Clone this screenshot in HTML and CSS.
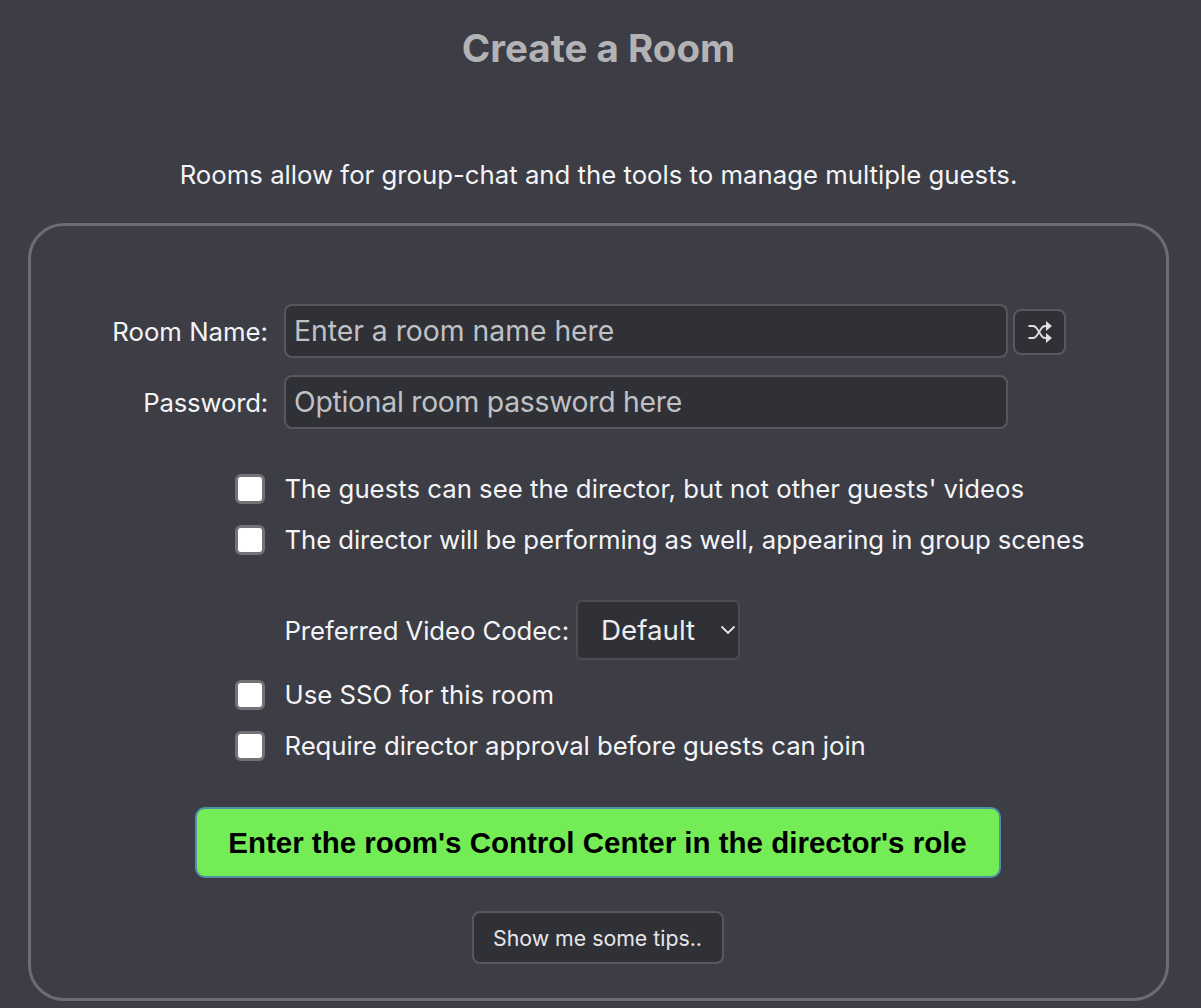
FILE: index.html
```html
<!DOCTYPE html>
<html>
<head>
    <meta charset="utf-8" />
    <title>Create a Room</title>
    <link rel="stylesheet" href="styles.css">
</head>
<body>
    <div class="page">
        <h1 class="title">Create a Room</h1>
        <p class="intro">Rooms allow for group-chat and the tools to manage multiple guests.</p>

        <div class="card">
            <div class="field-row">
                <label class="field-label" for="room-name">Room Name:</label>
                <input class="text-input" id="room-name" type="text" placeholder="Enter a room name here" />
                <button class="shuffle-btn" type="button" aria-label="Random room name">
                    <svg width="26" height="26" viewBox="0 0 26 26" fill="none" stroke="#e0e0e4" stroke-width="1.800">
                        <path d="M1.500 7h4.500c2 0 3 1 4.200 3l3.800 6c1.200 2 2.200 3 4.200 3h1.500" />
                        <path d="M1.500 19h4.500c2 0 3-1 4.200-3l3.800-6c1.200-2 2.200-3 4.200-3h1.500" />
                        <path d="M19 2l6 5-6 5z" fill="#e0e0e4" stroke="none" />
                        <path d="M19 14l6 5-6 5z" fill="#e0e0e4" stroke="none" />
                    </svg>
                </button>
            </div>
            <div class="field-row field-row-second">
                <label class="field-label tight-label" for="room-pass">Password:</label>
                <input class="text-input pass-input" id="room-pass" type="text" placeholder="Optional room password here" />
            </div>

            <div class="options">
                <label class="option option-a"><input class="check" type="checkbox" /><span>The guests can see the director, but not other guests' videos</span></label>
                <label class="option option-b"><input class="check" type="checkbox" /><span>The director will be performing as well, appearing in group scenes</span></label>
                <div class="codec-row">
                    <label for="codec">Preferred Video Codec:</label>
                    <div class="select-wrap">
                        <select class="codec-select" id="codec">
                            <option>Default</option>
                        </select>
                        <svg class="select-arrow" width="16" height="10" viewBox="0 0 16 10" fill="none" stroke="#e6e6ea" stroke-width="1.800">
                            <path d="M1.500 1.500L8 8l6.500-6.500" />
                        </svg>
                    </div>
                </div>
                <label class="option option-c"><input class="check" type="checkbox" /><span>Use SSO for this room</span></label>
                <label class="option option-d"><input class="check" type="checkbox" /><span>Require director approval before guests can join</span></label>
            </div>

            <div class="actions">
                <button class="enter-btn" type="button">Enter the room's Control Center in the director's role</button>
                <button class="tips-btn" type="button">Show me some tips..</button>
            </div>
        </div>
    </div>
</body>
</html>
```

FILE: styles.css
```css
html, body {
    margin: 0;
    height: 100%;
    overflow: hidden;
    background: #3c3d45;
}
body {
    font-family: Inter, "Noto Sans", sans-serif;
    color: #f4f4f6;
}
.page {
    padding: 0 32px 0 28px;
}
.title {
    margin: 0;
    padding-top: 26px;
    font-size: 38.5px;
    line-height: 44px;
    font-weight: 700;
    color: #b3b3b5;
    text-align: center;
}
.intro {
    margin: 0;
    padding-top: 90px;
    font-size: 25.75px;
    line-height: 30px;
    text-align: center;
}
.card {
    box-sizing: border-box;
    height: 778px;
    margin-top: 33px;
    padding: 78px 0 0;
    border: 3px solid #6c6d70;
    border-radius: 36px;
}
.field-row {
    display: flex;
    align-items: center;
}
.field-row-second {
    margin-top: 17px;
}
.field-label {
    width: 237px;
    margin-right: 16px;
    font-size: 25.75px;
    text-align: right;
}
.tight-label {
    letter-spacing: -0.2px;
}
.text-input {
    box-sizing: border-box;
    width: 724px;
    height: 54px;
    padding: 0 8px;
    border: 2px solid #57585d;
    border-radius: 8px;
    background: #303137;
    color: #f4f4f6;
    font-family: inherit;
    font-size: 28.3px;
}
.text-input::placeholder {
    color: #c0c1c5;
    opacity: 1;
}
.pass-input::placeholder {
    letter-spacing: -0.25px;
}
.shuffle-btn {
    box-sizing: border-box;
    display: flex;
    align-items: center;
    justify-content: center;
    width: 53px;
    height: 46px;
    margin: 2px 0 0 5px;
    padding: 0;
    border: 2px solid #57585d;
    border-radius: 8px;
    background: #303137;
}
.options {
    padding: 44px 0 0 203.5px;
}
.option {
    display: flex;
    align-items: center;
    font-size: 25.75px;
}
.option-b {
    margin-top: 20px;
    letter-spacing: -0.09px;
}
.option-c {
    margin-top: 19px;
}
.option-d {
    margin-top: 20px;
    letter-spacing: -0.06px;
}
.check {
    appearance: none;
    box-sizing: border-box;
    flex: none;
    width: 30px;
    height: 30px;
    margin: 0 20px 0 0;
    border: 3px solid #727377;
    border-radius: 6px;
    background: #fff;
}
.codec-row {
    display: flex;
    align-items: center;
    margin-top: 45px;
    padding-left: 50px;
    font-size: 25.75px;
    letter-spacing: -0.09px;
}
.select-wrap {
    position: relative;
    margin-left: 7px;
}
.codec-select {
    appearance: none;
    display: block;
    box-sizing: border-box;
    width: 164px;
    height: 60px;
    padding: 0 0 0 23px;
    border: 2px solid #4c4d53;
    border-radius: 6px;
    background: #303137;
    color: #ecedf0;
    font-family: inherit;
    font-size: 27.7px;
}
.select-arrow {
    position: absolute;
    top: 25px;
    right: 4px;
    pointer-events: none;
}
.actions {
    display: flex;
    flex-direction: column;
    align-items: center;
    padding: 46px 2px 0 0;
}
.enter-btn {
    box-sizing: border-box;
    width: 806px;
    height: 71px;
    padding: 0;
    border: 2px solid #4f8fa8;
    border-radius: 10px;
    background: #73ec55;
    color: #000;
    font-family: "Liberation Sans", Arial, sans-serif;
    font-size: 29.5px;
    font-weight: 700;
}
.tips-btn {
    box-sizing: border-box;
    width: 252px;
    height: 53px;
    margin-top: 33px;
    padding: 0;
    border: 2px solid #57585d;
    border-radius: 8px;
    background: #303137;
    color: #e6e6ea;
    font-family: inherit;
    font-size: 21.3px;
}
```
